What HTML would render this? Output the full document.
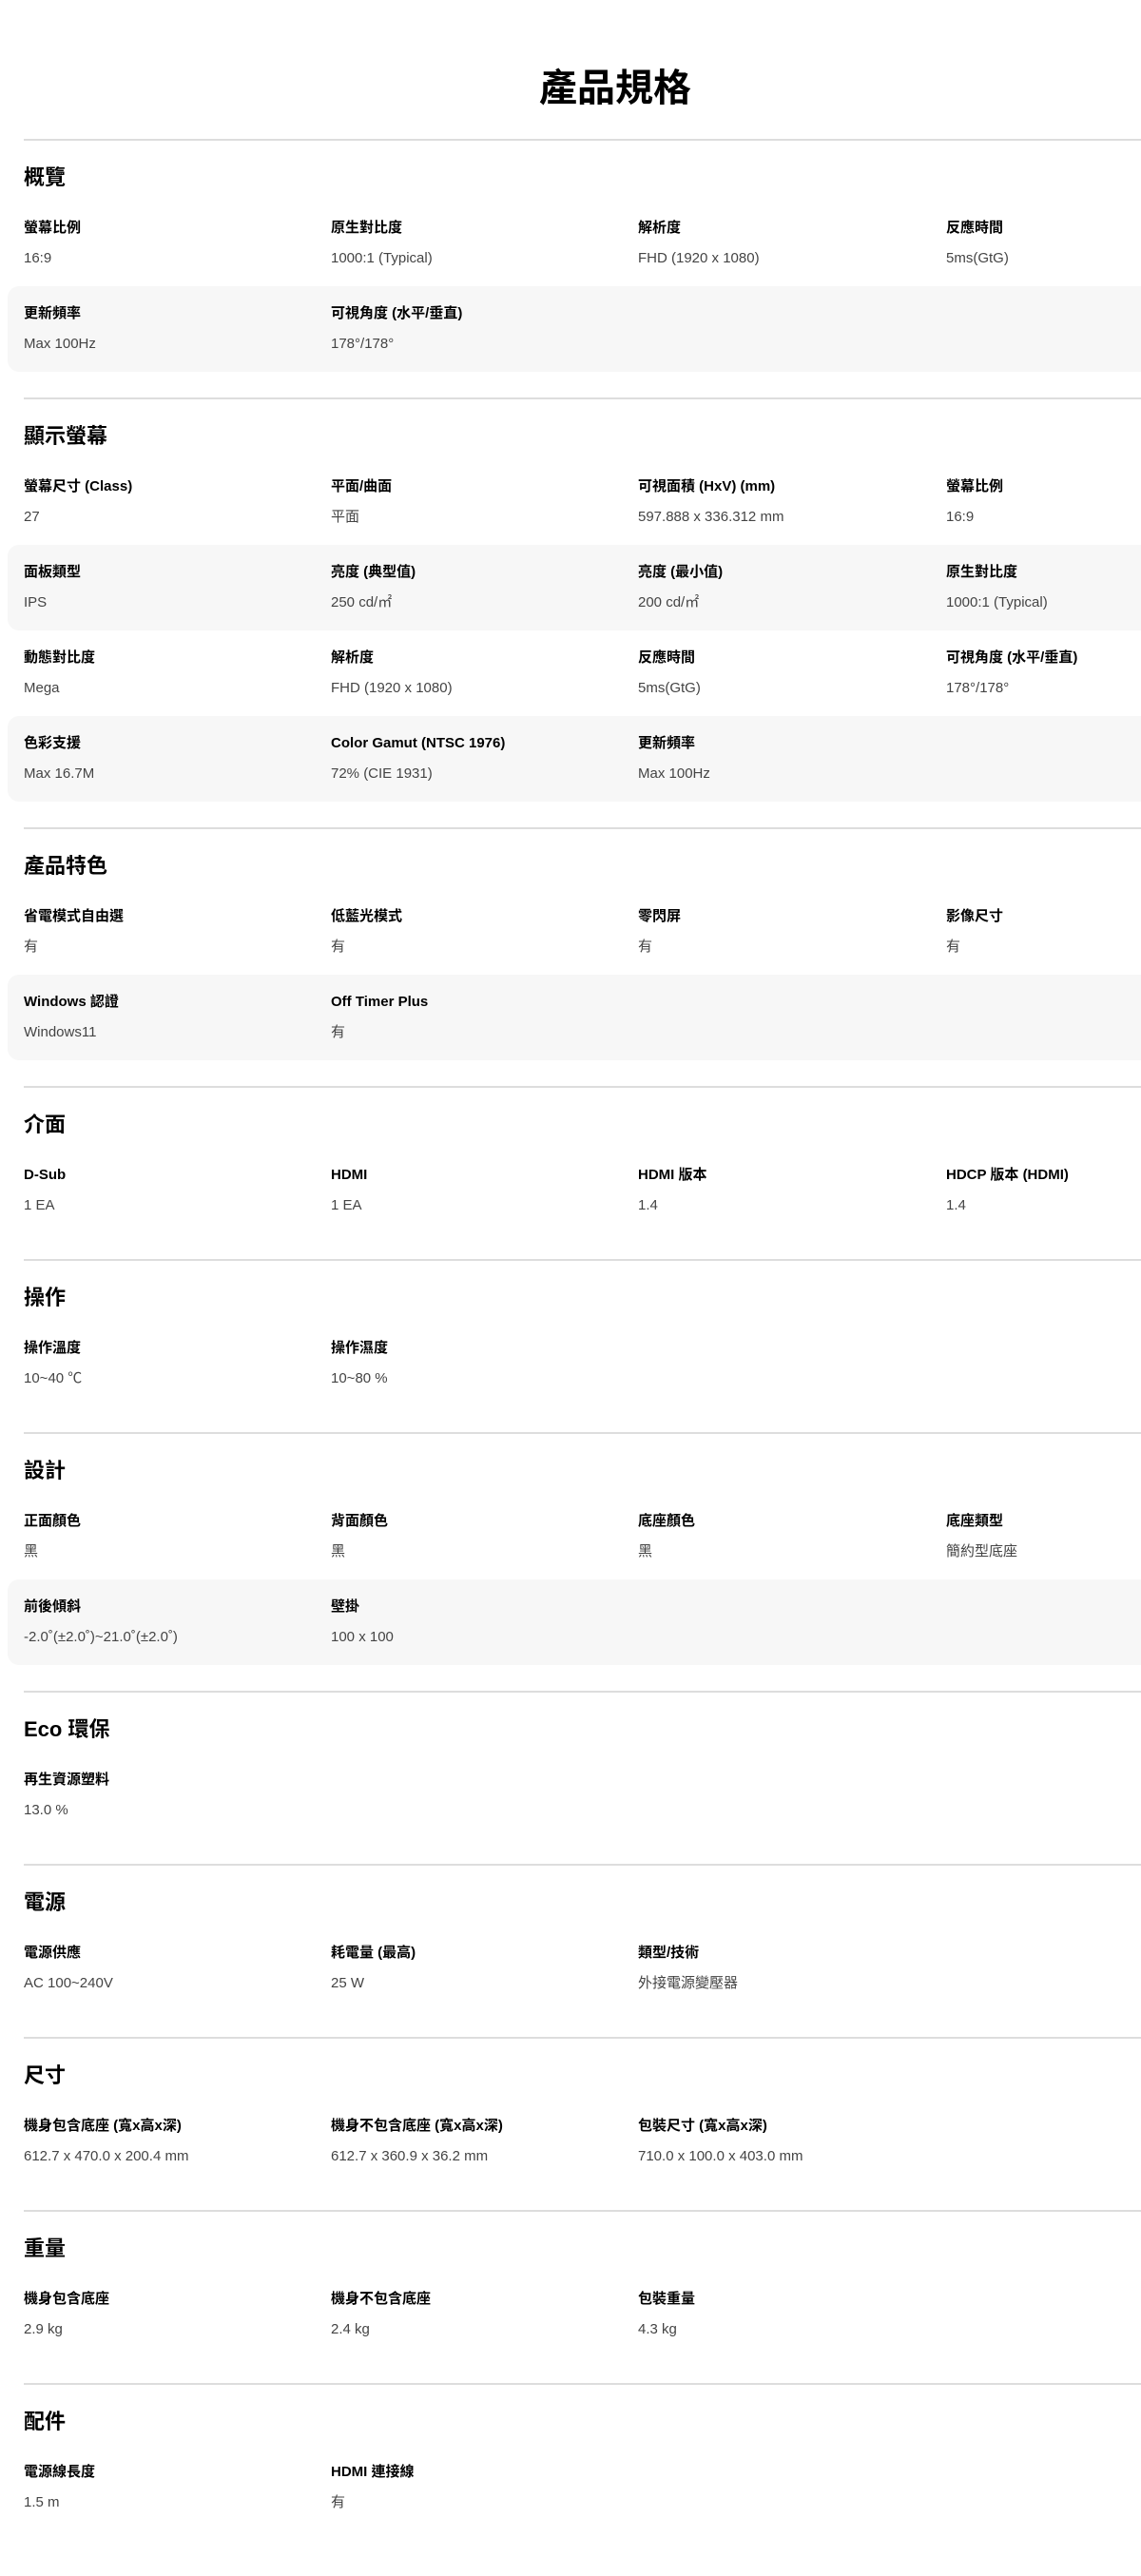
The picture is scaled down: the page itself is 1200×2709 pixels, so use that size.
<!DOCTYPE html>
<html><head><meta charset="utf-8"><style>
html,body{margin:0;padding:0;background:#fff;width:1200px;height:2709px;overflow:hidden}
body{font-family:"Liberation Sans","Noto Sans CJK TC",sans-serif;color:#000;position:relative}
.title{position:absolute;top:66px;left:0;width:1294px;text-align:center;font-size:40px;font-weight:700;line-height:54px;margin:0}
.wrap{position:absolute;top:146px;left:0;width:1300px}
.sec{border-top:2px solid #ddd;margin-left:25px;height:calc(92px + var(--n)*90px);box-sizing:border-box}
.sec h2{margin:0;height:63px;box-sizing:border-box;padding-top:26px;font-size:22px;line-height:26px;font-weight:700;margin-left:0}
.row{height:90px;position:relative;margin-left:-17px;padding-left:17px;border-radius:12px}
.row.g{background:#f7f7f7}
.c{position:absolute;top:0;width:320px}
.c b{position:absolute;top:20px;font-size:15px;line-height:18px;white-space:nowrap;font-weight:700}
.c span{position:absolute;top:52px;font-size:15px;line-height:18px;white-space:nowrap;color:#444}
.c1{left:17px}.c2{left:340px}.c3{left:663px}.c4{left:987px}
</style></head><body>
<h1 class="title">產品規格</h1>
<div class="wrap">
<div class="sec" style="--n:2"><h2>概覽</h2>
<div class="row"><div class="c c1"><b>螢幕比例</b><span>16:9</span></div><div class="c c2"><b>原生對比度</b><span>1000:1 (Typical)</span></div><div class="c c3"><b>解析度</b><span>FHD (1920 x 1080)</span></div><div class="c c4"><b>反應時間</b><span>5ms(GtG)</span></div></div>
<div class="row g"><div class="c c1"><b>更新頻率</b><span>Max 100Hz</span></div><div class="c c2"><b>可視角度 (水平/垂直)</b><span>178°/178°</span></div></div>
</div>
<div class="sec" style="--n:4"><h2>顯示螢幕</h2>
<div class="row"><div class="c c1"><b>螢幕尺寸 (Class)</b><span>27</span></div><div class="c c2"><b>平面/曲面</b><span>平面</span></div><div class="c c3"><b>可視面積 (HxV) (mm)</b><span>597.888 x 336.312 mm</span></div><div class="c c4"><b>螢幕比例</b><span>16:9</span></div></div>
<div class="row g"><div class="c c1"><b>面板類型</b><span>IPS</span></div><div class="c c2"><b>亮度 (典型值)</b><span>250 cd/㎡</span></div><div class="c c3"><b>亮度 (最小值)</b><span>200 cd/㎡</span></div><div class="c c4"><b>原生對比度</b><span>1000:1 (Typical)</span></div></div>
<div class="row"><div class="c c1"><b>動態對比度</b><span>Mega</span></div><div class="c c2"><b>解析度</b><span>FHD (1920 x 1080)</span></div><div class="c c3"><b>反應時間</b><span>5ms(GtG)</span></div><div class="c c4"><b>可視角度 (水平/垂直)</b><span>178°/178°</span></div></div>
<div class="row g"><div class="c c1"><b>色彩支援</b><span>Max 16.7M</span></div><div class="c c2"><b>Color Gamut (NTSC 1976)</b><span>72% (CIE 1931)</span></div><div class="c c3"><b>更新頻率</b><span>Max 100Hz</span></div></div>
</div>
<div class="sec" style="--n:2"><h2>產品特色</h2>
<div class="row"><div class="c c1"><b>省電模式自由選</b><span>有</span></div><div class="c c2"><b>低藍光模式</b><span>有</span></div><div class="c c3"><b>零閃屏</b><span>有</span></div><div class="c c4"><b>影像尺寸</b><span>有</span></div></div>
<div class="row g"><div class="c c1"><b>Windows 認證</b><span>Windows11</span></div><div class="c c2"><b>Off Timer Plus</b><span>有</span></div></div>
</div>
<div class="sec" style="--n:1"><h2>介面</h2>
<div class="row"><div class="c c1"><b>D-Sub</b><span>1 EA</span></div><div class="c c2"><b>HDMI</b><span>1 EA</span></div><div class="c c3"><b>HDMI 版本</b><span>1.4</span></div><div class="c c4"><b>HDCP 版本 (HDMI)</b><span>1.4</span></div></div>
</div>
<div class="sec" style="--n:1"><h2>操作</h2>
<div class="row"><div class="c c1"><b>操作溫度</b><span>10~40 ℃</span></div><div class="c c2"><b>操作濕度</b><span>10~80 %</span></div></div>
</div>
<div class="sec" style="--n:2"><h2>設計</h2>
<div class="row"><div class="c c1"><b>正面顏色</b><span>黑</span></div><div class="c c2"><b>背面顏色</b><span>黑</span></div><div class="c c3"><b>底座顏色</b><span>黑</span></div><div class="c c4"><b>底座類型</b><span>簡約型底座</span></div></div>
<div class="row g"><div class="c c1"><b>前後傾斜</b><span>-2.0˚(±2.0˚)~21.0˚(±2.0˚)</span></div><div class="c c2"><b>壁掛</b><span>100 x 100</span></div></div>
</div>
<div class="sec" style="--n:1"><h2>Eco 環保</h2>
<div class="row"><div class="c c1"><b>再生資源塑料</b><span>13.0 %</span></div></div>
</div>
<div class="sec" style="--n:1"><h2>電源</h2>
<div class="row"><div class="c c1"><b>電源供應</b><span>AC 100~240V</span></div><div class="c c2"><b>耗電量 (最高)</b><span>25 W</span></div><div class="c c3"><b>類型/技術</b><span>外接電源變壓器</span></div></div>
</div>
<div class="sec" style="--n:1"><h2>尺寸</h2>
<div class="row"><div class="c c1"><b>機身包含底座 (寬x高x深)</b><span>612.7 x 470.0 x 200.4 mm</span></div><div class="c c2"><b>機身不包含底座 (寬x高x深)</b><span>612.7 x 360.9 x 36.2 mm</span></div><div class="c c3"><b>包裝尺寸 (寬x高x深)</b><span>710.0 x 100.0 x 403.0 mm</span></div></div>
</div>
<div class="sec" style="--n:1"><h2>重量</h2>
<div class="row"><div class="c c1"><b>機身包含底座</b><span>2.9 kg</span></div><div class="c c2"><b>機身不包含底座</b><span>2.4 kg</span></div><div class="c c3"><b>包裝重量</b><span>4.3 kg</span></div></div>
</div>
<div class="sec" style="--n:1"><h2>配件</h2>
<div class="row"><div class="c c1"><b>電源線長度</b><span>1.5 m</span></div><div class="c c2"><b>HDMI 連接線</b><span>有</span></div></div>
</div>
</div>
</body></html>
